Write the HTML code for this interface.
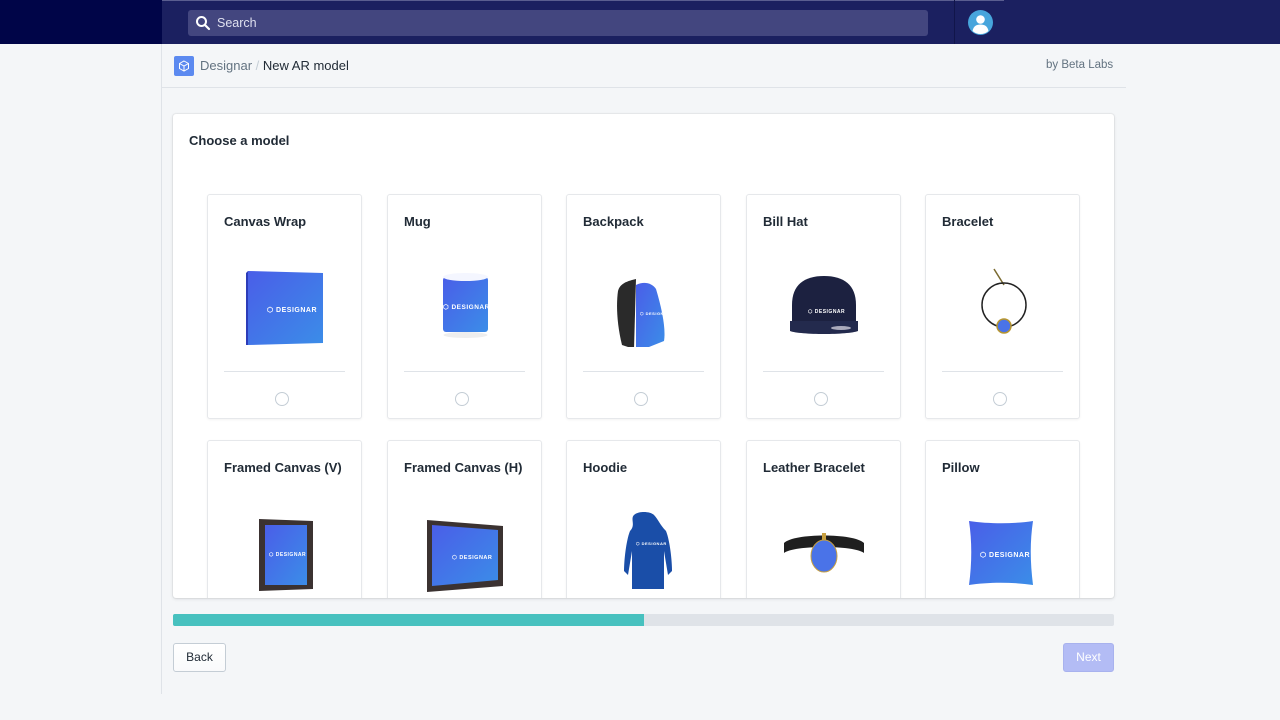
<!DOCTYPE html>
<html><head><meta charset="utf-8"><style>
*{margin:0;padding:0;box-sizing:border-box}
body{width:1280px;height:720px;overflow:hidden;background:#f4f6f8;font-family:"Liberation Sans",sans-serif;position:relative;color:#212b36}
.abs{position:absolute}
.tile{position:absolute;width:155px;height:225px;background:#fff;border:1px solid #e6e8eb;border-radius:3px;box-shadow:0 1px 2px rgba(0,0,0,.05)}
.tile h3{position:absolute;left:16px;top:19px;font-size:13px;font-weight:bold;color:#212b36}
.tile .hr{position:absolute;left:16px;right:16px;top:176px;border-top:1px solid #dfe3e8}
.tile .rd{position:absolute;left:67px;top:197px;width:14px;height:14px;border:1px solid #c4cdd5;border-radius:50%}
.tile svg{position:absolute;left:17px;top:62px}
.lg{font-size:7px;font-weight:bold;fill:#fff;letter-spacing:.5px}
</style></head><body>
<div class="abs" style="left:0;top:0;width:1280px;height:44px;background:#1b2060"></div>
<div class="abs" style="left:0;top:0;width:162px;height:44px;background:#000548"></div>
<div class="abs" style="left:162px;top:0;width:842px;height:1px;background:#5a5e90"></div>
<div class="abs" style="left:954px;top:0;width:1px;height:44px;background:#11154a"></div>
<div class="abs" style="left:188px;top:10px;width:740px;height:26px;background:#43467f;border-radius:3px"></div>
<svg class="abs" style="left:195px;top:15px" width="16" height="16" viewBox="0 0 16 16"><circle cx="6.5" cy="6.5" r="4.5" fill="none" stroke="#fff" stroke-width="2"/><path d="M10 10l4 4" stroke="#fff" stroke-width="2.2" stroke-linecap="round"/></svg>
<div class="abs" style="left:217px;top:16px;font-size:12.5px;color:#dfe0ef">Search</div>
<svg class="abs" style="left:968px;top:10px" width="25" height="25" viewBox="0 0 25 25"><circle cx="12.5" cy="12.5" r="12.5" fill="#47a5dc"/><circle cx="12.5" cy="9.5" r="4.3" fill="#fff"/><path d="M4.5 21c1-5 4-6.5 8-6.5s7 1.5 8 6.5a12 12 0 0 1-16 0z" fill="#fff"/></svg>
<div class="abs" style="left:161px;top:44px;width:1px;height:650px;background:#dfe3e8"></div>
<div class="abs" style="left:162px;top:87px;width:964px;height:1px;background:#dfe3e8"></div>
<div class="abs" style="left:174px;top:56px;width:20px;height:20px;background:#5c8af0;border-radius:2px"></div>
<svg class="abs" style="left:177px;top:59px" width="14" height="14" viewBox="0 0 14 14"><path d="M7 2l4.5 2.5v5L7 12 2.5 9.5v-5z M2.5 4.5L7 7l4.5-2.5 M7 7v5" fill="none" stroke="#fff" stroke-width="1"/></svg>
<div class="abs" style="left:200px;top:58px;font-size:13px;color:#637381">Designar <span style="color:#c4cdd5">/</span> <span style="color:#212b36">New AR model</span></div>
<div class="abs" style="left:1046px;top:59px;font-size:11.5px;color:#637381">by Beta Labs</div>
<div class="abs" style="left:173px;top:114px;width:941px;height:484px;background:#fff;border-radius:3px;box-shadow:0 0 0 1px rgba(63,63,68,.05),0 1px 3px rgba(63,63,68,.15);overflow:hidden">
<div class="abs" style="left:16px;top:19px;font-size:13px;font-weight:bold">Choose a model</div>
<div class="tile" style="left:34px;top:80px"><h3>Canvas Wrap</h3><svg width="120" height="90"><defs><linearGradient id="g" x1="0" y1="0" x2="1" y2="1"><stop offset="0" stop-color="#4a5ee8"/><stop offset="1" stop-color="#3b8de8"/></linearGradient></defs><path d="M23 14l75 2v70l-75 2z" fill="url(#g)"/><path d="M23 14l-2 2v72l2 0z" fill="#2c3cb8"/><text x="42" y="55" class="lg">⬡ DESIGNAR</text></svg><div class="hr"></div><div class="rd"></div></div>
<div class="tile" style="left:214px;top:80px"><h3>Mug</h3><svg width="120" height="90"><rect x="38" y="20" width="45" height="55" rx="3" fill="url(#g)"/><ellipse cx="60.5" cy="20" rx="22.5" ry="4" fill="#f4f6ff"/><text x="38" y="52" class="lg" style="font-size:6.5px">⬡ DESIGNAR</text><ellipse cx="60.5" cy="78" rx="22" ry="3" fill="#eee"/></svg><div class="hr"></div><div class="rd"></div></div>
<div class="tile" style="left:393px;top:80px"><h3>Backpack</h3><svg width="120" height="90"><path d="M34 34c2-8 10-10 18-12l-2 70-12-4c-5-20-6-40-4-54z" fill="#2a2a2a"/><path d="M52 28c8-4 16-2 20 4 6 20 10 40 8 52l-20 8-8-2z" fill="url(#g)"/><text x="56" y="58" class="lg" style="font-size:4px">⬡ DESIGNAR</text></svg><div class="hr"></div><div class="rd"></div></div>
<div class="tile" style="left:573px;top:80px"><h3>Bill Hat</h3><svg width="120" height="90"><path d="M28 70V48c0-20 12-29 32-29s32 9 32 29v22z" fill="#1c2140"/><path d="M26 64h68v10c-10 4-58 4-68 0z" fill="#232a4d"/><ellipse cx="77" cy="71" rx="10" ry="2" fill="#aab"/><text x="44" y="56" class="lg" style="font-size:5px">⬡ DESIGNAR</text></svg><div class="hr"></div><div class="rd"></div></div>
<div class="tile" style="left:752px;top:80px"><h3>Bracelet</h3><svg width="120" height="90"><path d="M51 12l10 16" stroke="#7a6a30" stroke-width="1.5"/><circle cx="61" cy="48" r="22" fill="none" stroke="#222" stroke-width="1.5"/><circle cx="61" cy="69" r="7" fill="#4a73e8" stroke="#b8962e" stroke-width="1.5"/></svg><div class="hr"></div><div class="rd"></div></div>
<div class="tile" style="left:34px;top:326px"><h3>Framed Canvas (V)</h3><svg width="120" height="90"><path d="M34 16l54 2v68l-54 2z" fill="#3b3231"/><rect x="40" y="22" width="42" height="60" fill="url(#g)"/><text x="44" y="53" class="lg" style="font-size:5px">⬡ DESIGNAR</text></svg></div>
<div class="tile" style="left:214px;top:326px"><h3>Framed Canvas (H)</h3><svg width="120" height="90"><path d="M22 17l76 6v60l-76 6z" fill="#3b3231"/><path d="M27 22l66 5v50l-66 6z" fill="url(#g)"/><text x="47" y="56" class="lg" style="font-size:5.5px">⬡ DESIGNAR</text></svg></div>
<div class="tile" style="left:393px;top:326px"><h3>Hoodie</h3><svg width="120" height="90"><path d="M50 12c4-4 16-4 20 0 4 4 6 10 12 16 4 10 6 30 6 40l-4 4-4-24v38H48V48l-4 24-4-4c0-10 2-30 6-40 6-6 0-12 4-16z" fill="#1a4ea8"/><text x="52" y="42" class="lg" style="font-size:4px">⬡ DESIGNAR</text></svg></div>
<div class="tile" style="left:573px;top:326px"><h3>Leather Bracelet</h3><svg width="120" height="90"><path d="M20 40c10-10 70-10 80 0v10c-10-8-70-8-80 0z" fill="#1f1f1f"/><rect x="58" y="30" width="4" height="12" fill="#c8a040"/><ellipse cx="60" cy="53" rx="13" ry="16" fill="#4a73e8" stroke="#c8a040"/></svg></div>
<div class="tile" style="left:752px;top:326px"><h3>Pillow</h3><svg width="120" height="90"><path d="M26 18c20 3 45 3 64 0-3 20-3 40 0 64-20-3-45-3-64 0 3-22 3-44 0-64z" fill="url(#g)"/><text x="37" y="54" class="lg" style="font-size:7px">⬡ DESIGNAR</text></svg></div>
</div>
<div class="abs" style="left:173px;top:614px;width:941px;height:12px;background:#dfe3e8;border-radius:2px;overflow:hidden"><div style="width:471px;height:12px;background:#47c1bf"></div></div>
<div class="abs" style="left:173px;top:643px;width:53px;height:29px;background:linear-gradient(#fff,#f9fafb);border:1px solid #c4cdd5;border-radius:3px;font-size:12px;text-align:center;line-height:27px;color:#212b36">Back</div>
<div class="abs" style="left:1063px;top:643px;width:51px;height:29px;background:#b3bcf5;border:1px solid #a8b2ee;border-radius:3px;font-size:12px;text-align:center;line-height:27px;color:#fff">Next</div>
</body></html>
